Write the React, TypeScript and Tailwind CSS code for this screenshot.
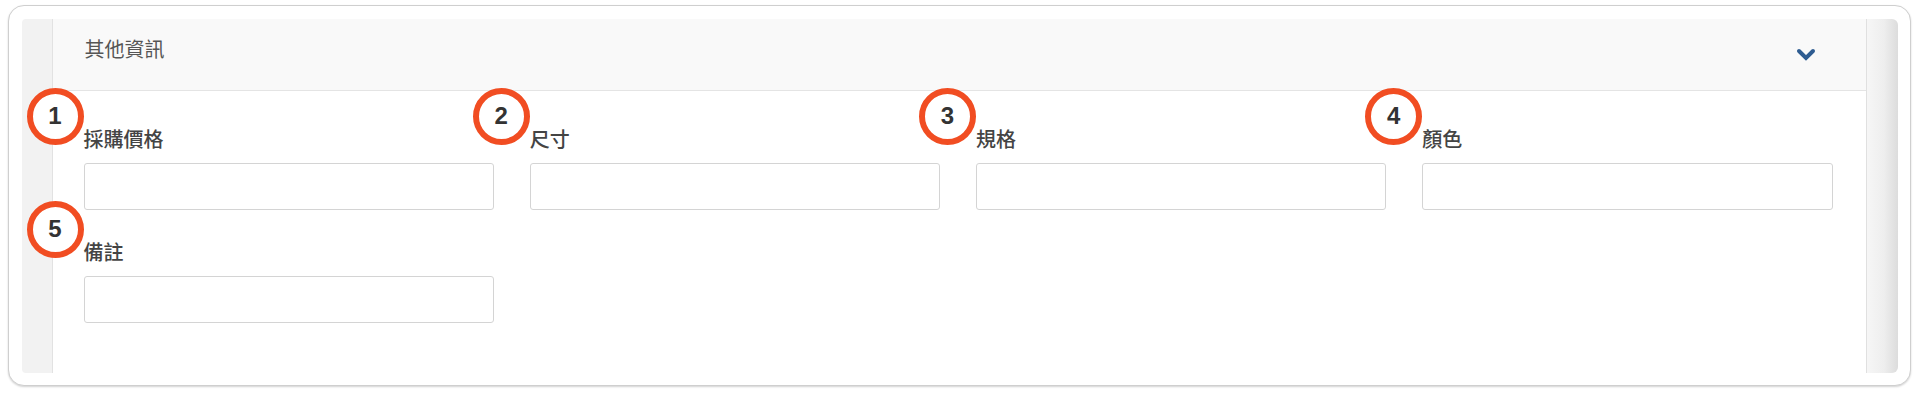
import React from "react";

const cjk = { fontFamily: '"Noto Sans CJK TC", "Noto Sans", sans-serif' };

function Badge({ n }: { n: number }) {
  return (
    <div
      className="absolute left-[-57px] top-[-39px] w-[57px] h-[57px] rounded-full border-[6px] border-[#f14d22] bg-white flex items-center justify-center"
      style={{ fontFamily: '"Liberation Sans", Arial, sans-serif' }}
    >
      <span className="text-[24px] font-bold text-[#333] leading-none">{n}</span>
    </div>
  );
}

function Field({ n, label }: { n: number; label: string }) {
  return (
    <div className="relative flex flex-col">
      <Badge n={n} />
      <label className="text-[20px] leading-[24px] font-medium text-[#444] h-[24px]" style={cjk}>
        {label}
      </label>
      <div className="mt-[12px] h-[47px] rounded-[3px] border-[1.5px] border-[#d4d4d4] bg-white" />
    </div>
  );
}

export default function App() {
  return (
    <div className="w-[1920px] h-[399px] bg-white pt-[5px] pl-[8px]">
      <div className="w-[1903px] h-[381px] rounded-[16px] border-[1.5px] border-[#cfcfcf] bg-white shadow-[0_1px_2px_rgba(0,0,0,0.18)] p-[12.5px]">
        <div className="flex h-full rounded-[4px] overflow-hidden">
          <div className="w-[31px] bg-[#f2f2f2] border-r border-[#e2e2e2] shrink-0" />
          <div className="flex-1 flex flex-col">
            <div className="h-[72px] bg-[#f9f9f9] border-b-[1.5px] border-[#e4e4e4] flex items-center justify-between pl-[32px] pr-[50px] pb-[10px]">
              <span className="text-[20px] text-[#555] leading-[24px]" style={cjk}>
                其他資訊
              </span>
              <svg width="20" height="14" viewBox="0 0 20 14" className="mt-[12px]">
                <polyline
                  points="3,3 10,10 17,3"
                  fill="none"
                  stroke="#2e5c91"
                  strokeWidth="4"
                  strokeLinecap="round"
                  strokeLinejoin="miter"
                />
              </svg>
            </div>
            <div className="flex-1 bg-white pl-[31px] pr-[33px] pt-[36px]">
              <div className="grid grid-cols-4 gap-x-[36px] gap-y-[30px]">
                <Field n={1} label="採購價格" />
                <Field n={2} label="尺寸" />
                <Field n={3} label="規格" />
                <Field n={4} label="顏色" />
                <Field n={5} label="備註" />
              </div>
            </div>
          </div>
          <div className="w-[32px] shrink-0 border-l border-[#e0e0e0] bg-[linear-gradient(to_right,#f6f6f6,#eeeeee_55%,#dcdcdc)] rounded-tr-[6px] rounded-br-[6px]" />
        </div>
      </div>
    </div>
  );
}
